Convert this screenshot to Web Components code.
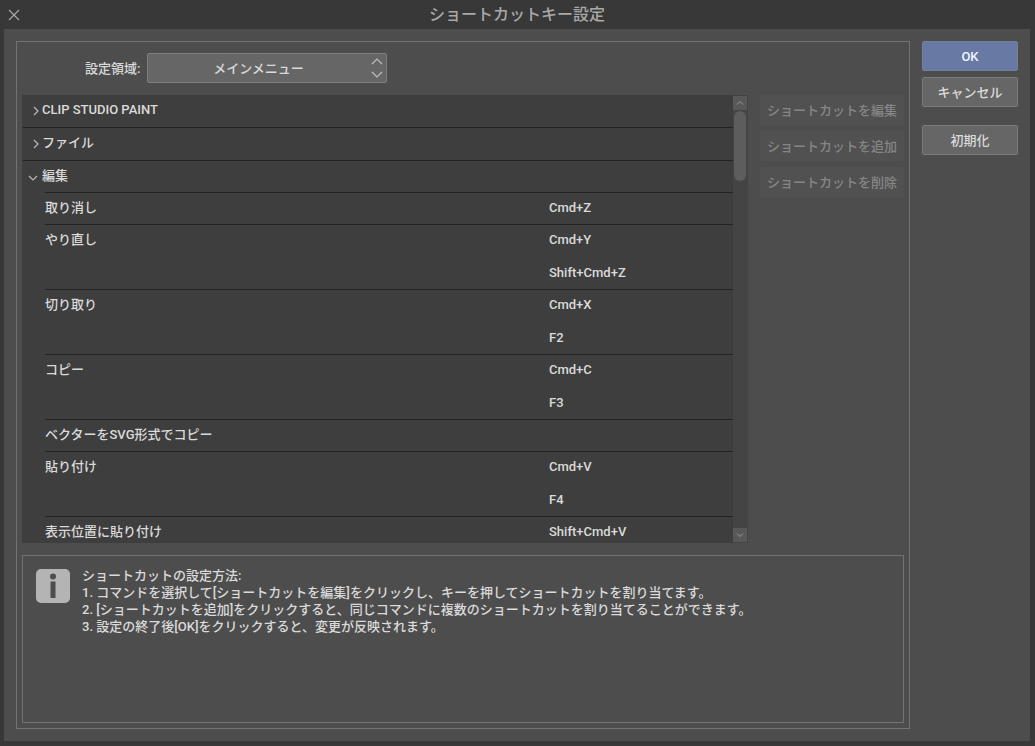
<!DOCTYPE html>
<html lang="ja">
<head>
<meta charset="utf-8">
<meta name="viewport" content="width=device-width, initial-scale=1">
<title>ショートカットキー設定</title>
<style>
  :root {
    --frame: #383838;
    --panel: #4d4d4d;
    --list: #3e3e3e;
    --line: #737373;
    --rule: #232323;
    --control: #666666;
    --accent: #6879a3;
    --text: #dadada;
    --muted: #868686;
  }
  body {
    margin: 0;
    background: var(--frame);
    color: var(--text);
    font: 500 13px/17px Roboto, "Noto Sans CJK JP", sans-serif;
  }
</style>
</head>
<body>
<shortcut-dialog>
  <span slot="title">ショートカットキー設定</span>
  <area-picker slot="picker"></area-picker>
  <shortcut-list slot="list"></shortcut-list>
  <push-button slot="edit" variant="quiet" disabled>ショートカットを編集</push-button>
  <push-button slot="edit" variant="quiet" disabled>ショートカットを追加</push-button>
  <push-button slot="edit" variant="quiet" disabled>ショートカットを削除</push-button>
  <help-note slot="help">
    <span slot="heading">ショートカットの設定方法:</span>
    <span slot="step">1. コマンドを選択して[ショートカットを編集]をクリックし、キーを押してショートカットを割り当てます。</span>
    <span slot="step">2. [ショートカットを追加]をクリックすると、同じコマンドに複数のショートカットを割り当てることができます。</span>
    <span slot="step">3. 設定の終了後[OK]をクリックすると、変更が反映されます。</span>
  </help-note>
  <push-button slot="confirm" variant="primary">OK</push-button>
  <push-button slot="confirm">キャンセル</push-button>
  <push-button slot="reset">初期化</push-button>
</shortcut-dialog>

<script>
class BaseElement extends HTMLElement {
  constructor() {
    super();
    this.attachShadow({ mode: "open" }).innerHTML = this.constructor.markup;
  }
}

customElements.define("shortcut-dialog", class extends BaseElement {
  static markup = `
    <style>
      :host { display: flex; flex-direction: column; box-sizing: border-box; height: 100vh; min-height: 480px; padding: 0 5px 5px 4px; }
      header { display: grid; grid-template-columns: 20px 1fr 20px; align-items: center; height: 29px; }
      h1 { margin: 0; text-align: center; font-size: 16px; font-weight: 500; line-height: 24px; color: #a8a8a8; }
      .close { display: grid; place-items: center; width: 20px; height: 20px; padding: 0; border: 0; background: none; color: #a8a8a8; }
      main { flex: 1; min-height: 0; display: flex; gap: 12px; padding: 12px; background: var(--panel); }
      .frame { flex: 1; min-width: 0; display: flex; flex-direction: column; box-sizing: border-box; border: 1px solid var(--line); padding: 11px 5px 5px; }
      .work { flex: 1; min-height: 0; display: flex; gap: 12px; margin: 12px 0; }
      ::slotted([slot="list"]) { flex: 1; min-width: 0; }
      .edit { display: flex; flex-direction: column; gap: 6px; width: 144px; }
      .side { display: flex; flex-direction: column; gap: 18px; width: 96px; }
      .side div { display: flex; flex-direction: column; gap: 6px; }
    </style>
    <header>
      <button class="close" aria-label="閉じる">
        <svg width="12" height="12" viewBox="0 0 12 12" fill="none" stroke="currentColor" stroke-width="1.2"><path d="M1 1l10 10M11 1L1 11"/></svg>
      </button>
      <h1><slot name="title"></slot></h1>
    </header>
    <main>
      <section class="frame">
        <slot name="picker"></slot>
        <div class="work">
          <slot name="list"></slot>
          <div class="edit"><slot name="edit"></slot></div>
        </div>
        <slot name="help"></slot>
      </section>
      <aside class="side">
        <div><slot name="confirm"></slot></div>
        <slot name="reset"></slot>
      </aside>
    </main>`;
});

customElements.define("push-button", class extends BaseElement {
  static markup = `
    <style>
      :host { display: block; }
      button { display: block; width: 100%; height: 30px; box-sizing: border-box; padding: 0; border: 1px solid #7a7a7a; border-radius: 2px; background: var(--control); color: var(--text); font: inherit; white-space: nowrap; }
      :host([variant="primary"]) button { background: var(--accent); border-color: #75809c; color: #f0f4ff; }
      :host([variant="quiet"]) button { background: #515151; border-color: #515151; color: var(--muted); }
    </style>
    <button><slot></slot></button>`;
  connectedCallback() {
    this.shadowRoot.querySelector("button").disabled = this.hasAttribute("disabled");
  }
});

customElements.define("area-picker", class extends BaseElement {
  static markup = `
    <style>
      :host { display: flex; align-items: center; gap: 7px; padding-left: 63px; }
      .box { display: grid; width: 240px; }
      select, svg { grid-area: 1 / 1; }
      select { appearance: none; height: 30px; box-sizing: border-box; margin: 0; padding: 0 18px 0 0; border: 1px solid #7e7e7e; border-radius: 2px; background: var(--control); color: var(--text); font: inherit; text-align: center; text-align-last: center; }
      svg { place-self: center end; margin-right: 4px; pointer-events: none; color: #bdbdbd; }
    </style>
    <label for="area">設定領域:</label>
    <div class="box">
      <select id="area"><option>メインメニュー</option></select>
      <svg width="12" height="22" viewBox="0 0 12 22" fill="none" stroke="currentColor" stroke-width="1.2"><path d="M1 7l5-5 5 5M1 15l5 5 5-5"/></svg>
    </div>`;
});

customElements.define("tree-arrow", class extends BaseElement {
  static markup = `
    <style>
      :host { display: grid; place-items: center; width: 12px; height: 12px; margin-top: 2px; color: #b8b8b8; }
      :host([open]) { margin-top: 4px; }
      :host([open]) svg { transform: rotate(90deg); }
    </style>
    <svg width="12" height="12" viewBox="0 0 12 12" fill="none" stroke="currentColor" stroke-width="1.2"><path d="M4 2l4 4-4 4"/></svg>`;
});

customElements.define("shortcut-list", class extends BaseElement {
  static groups = [
    { name: "CLIP STUDIO PAINT" },
    { name: "ファイル" },
    { name: "編集", items: [
      ["取り消し", "Cmd+Z"],
      ["やり直し", "Cmd+Y", "Shift+Cmd+Z"],
      ["切り取り", "Cmd+X", "F2"],
      ["コピー", "Cmd+C", "F3"],
      ["ベクターをSVG形式でコピー"],
      ["貼り付け", "Cmd+V", "F4"],
      ["表示位置に貼り付け", "Shift+Cmd+V"]
    ] }
  ];
  static markup = `
    <style>
      :host { display: flex; min-height: 0; background: var(--list); }
      .view { flex: 1; min-width: 0; overflow: auto; scrollbar-width: none; padding-left: 1px; }
      table { width: 100%; border-spacing: 0; table-layout: fixed; }
      .indent { width: 22px; }
      .keys { width: 184px; }
      th, td { padding: 0; text-align: left; vertical-align: top; font-weight: inherit; }
      .group th { height: 32px; border-bottom: 1px solid var(--rule); }
      .group.open th { height: 31px; border-bottom: 0; }
      .group div { display: flex; align-items: center; padding-left: 7px; line-height: 29px; }
      .group.open div { padding-left: 4px; gap: 3px; }
      .item th, .item .combo { border-top: 1px solid var(--rule); padding-bottom: 2px; line-height: 29px; height: 29px; }
      .combo div { display: grid; gap: 4px; }
      .bar { display: flex; flex-direction: column; width: 14px; padding: 1px 1px 1px 0; background: #444; }
      .bar button { display: grid; place-items: center; width: 14px; height: 14px; padding: 0; border: 0; background: #585858; color: #999; }
      .track { flex: 1; padding: 1px; }
      .thumb { height: 70px; border-radius: 6px; background: #5d5d5d; }
    </style>
    <div class="view" tabindex="-1">
      <table>
        <colgroup><col class="indent"><col><col class="keys"></colgroup>
        <tbody></tbody>
      </table>
    </div>
    <div class="bar">
      <button aria-label="上へ"><svg width="8" height="8" viewBox="0 0 8 8" fill="none" stroke="currentColor"><path d="M1 5.500l3-3 3 3"/></svg></button>
      <div class="track"><div class="thumb"></div></div>
      <button aria-label="下へ"><svg width="8" height="8" viewBox="0 0 8 8" fill="none" stroke="currentColor"><path d="M1 2.500l3 3 3-3"/></svg></button>
    </div>`;
  connectedCallback() {
    const root = this.shadowRoot;
    root.querySelector("tbody").innerHTML = this.constructor.groups.map(({ name, items }) => `
      <tr class="group${items ? " open" : ""}"><th colspan="3"><div><tree-arrow${items ? " open" : ""}></tree-arrow><span>${name}</span></div></th></tr>
      ${(items || []).map(([label, ...keys]) => `
        <tr class="item"><td></td><th scope="row">${label}</th><td class="combo"><div>${keys.map(k => `<span>${k}</span>`).join("")}</div></td></tr>`).join("")}`).join("");
    const view = root.querySelector(".view");
    const [up, down] = root.querySelectorAll(".bar button");
    up.onclick = () => view.scrollBy(0, -32);
    down.onclick = () => view.scrollBy(0, 32);
  }
});

customElements.define("help-note", class extends BaseElement {
  static markup = `
    <style>
      :host { display: flex; align-items: flex-start; gap: 12px; box-sizing: border-box; min-height: 168px; border: 1px solid var(--line); padding: 11px 13px; }
      svg { flex: none; margin-top: 2px; }
      p { margin: 0; }
      ::slotted(span) { display: block; }
    </style>
    <svg width="34" height="34" viewBox="0 0 34 34"><rect width="34" height="34" rx="5" fill="#b4b4b4"/><circle cx="17" cy="7.500" r="3" fill="#4d4d4d"/><path d="M14.500 12.500h5V29h-5z" fill="#4d4d4d"/></svg>
    <p><slot name="heading"></slot><slot name="step"></slot></p>`;
});
</script>
</body>
</html>
